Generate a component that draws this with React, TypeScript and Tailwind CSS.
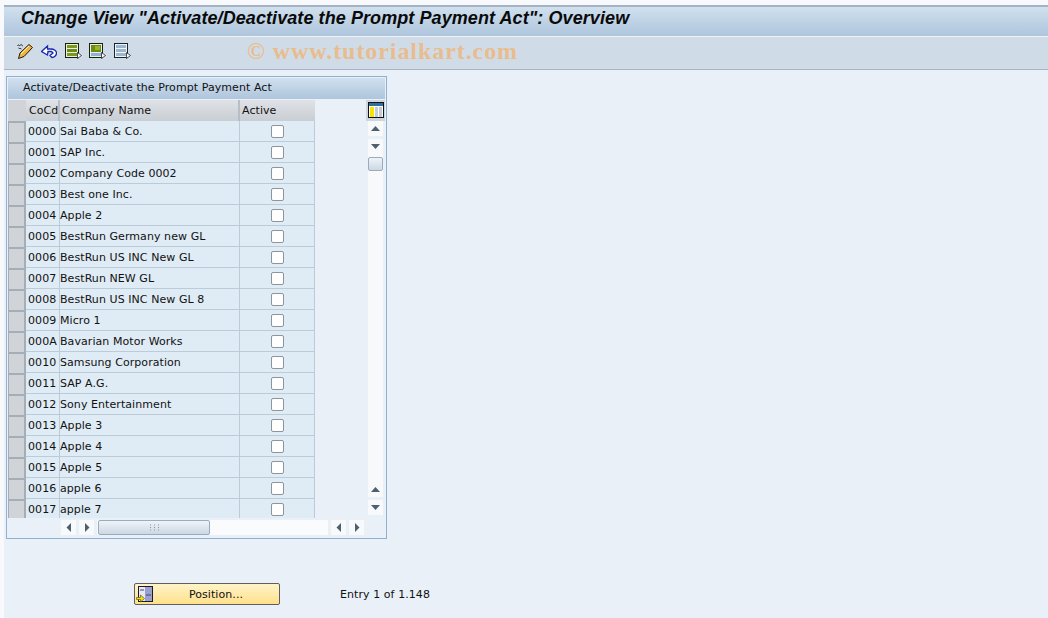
import React from 'react';

const rows = [
  ['0000', 'Sai Baba & Co.'],
  ['0001', 'SAP Inc.'],
  ['0002', 'Company Code 0002'],
  ['0003', 'Best one Inc.'],
  ['0004', 'Apple 2'],
  ['0005', 'BestRun Germany new GL'],
  ['0006', 'BestRun US INC New GL'],
  ['0007', 'BestRun NEW GL'],
  ['0008', 'BestRun US INC New GL 8'],
  ['0009', 'Micro 1'],
  ['000A', 'Bavarian Motor Works'],
  ['0010', 'Samsung Corporation'],
  ['0011', 'SAP A.G.'],
  ['0012', 'Sony Entertainment'],
  ['0013', 'Apple 3'],
  ['0014', 'Apple 4'],
  ['0015', 'Apple 5'],
  ['0016', 'apple 6'],
  ['0017', 'apple 7'],
];

const Pointer = () => <path d="M12.5 9.5v6l4-3z" fill="#fff" stroke="#222" strokeWidth="0.8" />;

const SelectAllIcon = () => (
  <svg width="17" height="16" viewBox="0 0 17 16">
    <rect x="0.5" y="0.5" width="13" height="14" fill="#e8eef2" stroke="#16200c" />
    <rect x="2" y="2" width="10" height="3" fill="#7d9a12" />
    <rect x="2" y="6" width="10" height="3" fill="#6e8c0e" />
    <rect x="2" y="10" width="10" height="3" fill="#7d9a12" />
    <Pointer />
  </svg>
);

const SelectBlockIcon = () => (
  <svg width="17" height="16" viewBox="0 0 17 16">
    <rect x="0.5" y="0.5" width="13" height="14" fill="#e8eef2" stroke="#16200c" />
    <rect x="2" y="2" width="10" height="7" fill="#6e8c0e" />
    <rect x="6" y="3" width="5" height="4" fill="#9ab52a" />
    <rect x="2" y="10" width="10" height="3" fill="#8fb2cc" />
    <Pointer />
  </svg>
);

const DeselectIcon = () => (
  <svg width="17" height="16" viewBox="0 0 17 16">
    <rect x="0.5" y="0.5" width="13" height="14" fill="#f2f5f8" stroke="#1a2430" />
    <rect x="2" y="2" width="10" height="3" fill="#9bb6cf" />
    <rect x="2" y="6" width="10" height="3" fill="#9bb6cf" />
    <rect x="2" y="10" width="10" height="3" fill="#9bb6cf" />
    <Pointer />
  </svg>
);

const Arrow = ({ dir }: { dir: 'up' | 'down' | 'left' | 'right' }) => {
  const d = {
    up: 'M1 6h9L5.5 1z',
    down: 'M1 1h9L5.5 6z',
    left: 'M5 1v9L0.5 5.5z',
    right: 'M1 1v9l4.5-4.5z',
  }[dir];
  const horizontal = dir === 'left' || dir === 'right';
  return (
    <div className="flex h-[15px] w-[15px] items-center justify-center bg-[#f7f9fb]">
      <svg width={horizontal ? 6 : 11} height={horizontal ? 11 : 7} viewBox={horizontal ? '0 0 6 11' : '0 0 11 7'}>
        <path d={d} fill="#4d6070" />
      </svg>
    </div>
  );
};

export default function App() {
  return (
    <div className="h-[618px] w-[1048px] overflow-hidden bg-[#f8f9fc] pl-1 text-[11px] leading-[15px] tracking-[0.07px] text-[#111] font-['DejaVu_Sans',sans-serif]">
      <div className="h-[5px]" />
      <div className="flex h-[32px] items-start border-t-2 border-b border-t-[#a4b2c4] border-b-[#f0f4f8] bg-gradient-to-b from-[#d0e0ee] to-[#aec5dc] pl-[17px] pt-[1px]">
        <span className="font-['Liberation_Sans',sans-serif] text-[18px] leading-[21px] font-bold italic tracking-[0.08px] text-[#0a0a0a]">
          Change View "Activate/Deactivate the Prompt Payment Act": Overview
        </span>
      </div>
      <div className="flex h-[33px] items-center border-b border-b-[#a5b5c6] bg-[#cfdce7] pb-[4px] pl-[13px]">
        <div className="flex items-center gap-[8px]">
          <svg width="16" height="16" viewBox="0 0 16 16">
            <path d="M0.500 3c1-2.500 2 1 3-1s1.500 2 2.500 0.500M1.500 5c1 1 2 0 3 1" fill="none" stroke="#222" />
            <path d="M12 1.500l3.500 3-8.500 9-5.500 2 1.500-5.500z" fill="#f4b63a" stroke="#1a1a1a" />
            <path d="M4 11l8-8" stroke="#fff2c0" />
          </svg>
          <svg width="16" height="16" viewBox="0 0 16 16">
            <path d="M0.500 8.500l6-5.500v3h3.500c3 0 5.500 2 5.500 4s-2 4.500-4.500 4.500l-2-2 3-2.500-1.500-1.500H7l-0.500 3.500z" fill="#fff" stroke="#1826b0" strokeWidth="1.300" />
          </svg>
          <SelectAllIcon />
          <div className="ml-[-1px] flex gap-[8px]">
            <SelectBlockIcon />
            <DeselectIcon />
          </div>
        </div>
        <span className="ml-[116px] font-['Liberation_Serif',serif] text-[24px] leading-[28px] font-bold tracking-[0.93px] text-[#e9bc8e]">
          © www.tutorialkart.com
        </span>
      </div>
      <div className="h-[548px] bg-[#e9f0f7] pl-[2px] pt-[6px]">
        <div className="w-[381px] border border-[#8fb0d0] bg-[#e9f0f7] p-px">
          <div className="flex h-[22px] items-center border-b border-b-[#e9f0f7] bg-gradient-to-b from-[#d0e0ee] to-[#aec5dc] pb-[2px] pl-[15px]">
            Activate/Deactivate the Prompt Payment Act
          </div>
          <div className="flex">
            <div className="w-[360px]">
              <div className="flex h-[418px] flex-col overflow-hidden">
                <div className="flex h-[21px] shrink-0">
                  <div className="w-[18px] bg-[#d0d4d9]" />
                  <div className="flex w-[34px] items-center border-r-2 border-r-[#b6bfc7] bg-gradient-to-b from-[#dfe2e6] to-[#c9ced4] pl-[3px]">CoCd</div>
                  <div className="flex w-[180px] items-center border-r-2 border-r-[#b6bfc7] bg-gradient-to-b from-[#dfe2e6] to-[#c9ced4] pl-[2px]">Company Name</div>
                  <div className="flex w-[75px] items-center bg-gradient-to-b from-[#dfe2e6] to-[#c9ced4] pl-[2px]">Active</div>
                </div>
                {rows.map(([code, name]) => (
                  <div key={code} className="flex h-[21px] shrink-0">
                    <div className="w-[18px] border-t-2 border-l border-r-2 border-t-[#a5adb6] border-l-[#a5adb6] border-r-[#a5adb6] bg-[#d0d4d9]" />
                    <div className="flex w-[34px] items-center border-r border-b border-[#bccbd8] bg-[#dfebf5] pl-[2px]">{code}</div>
                    <div className="flex w-[180px] items-center border-r border-b border-[#bccbd8] bg-[#dfebf5]">{name}</div>
                    <div className="flex w-[75px] items-center justify-center border-r border-b border-[#bccbd8] bg-[#dfebf5]">
                      <div className="h-[13px] w-[13px] rounded-[2px] border border-[#8e9499] bg-white" />
                    </div>
                  </div>
                ))}
              </div>
              <div className="mt-[2px] flex h-[15px] items-center gap-[3px] pl-[53px]">
                <Arrow dir="left" />
                <Arrow dir="right" />
                <div className="flex h-[15px] w-[231px] bg-[#fafbfc] pl-[1px]">
                  <div className="flex h-[15px] w-[112px] items-center justify-center rounded-[2px] border border-[#9aabbc] bg-gradient-to-b from-[#eef3f8] to-[#ccd8e4]">
                    <svg width="9" height="7" viewBox="0 0 9 7">
                      <path d="M0 1h1M4 1h1M8 1h1M0 3.500h1M4 3.500h1M8 3.500h1M0 6h1M4 6h1M8 6h1" stroke="#8a97a3" />
                    </svg>
                  </div>
                </div>
                <Arrow dir="left" />
                <Arrow dir="right" />
              </div>
            </div>
            <div className="flex w-[19px] flex-col items-center">
              <div className="flex h-[21px] w-[19px] items-start justify-center bg-[#cfd5db] pt-[2px]">
                <svg width="16" height="16" viewBox="0 0 16 16">
                  <rect x="0.5" y="0.5" width="15" height="15" fill="#fff" stroke="#111" />
                  <rect x="1" y="1" width="14" height="3" fill="#2f6f9f" />
                  <rect x="2" y="5" width="4" height="10" fill="#f5e400" />
                  <rect x="7" y="5" width="3" height="10" fill="#c2ccd6" />
                  <rect x="11" y="5" width="3" height="10" fill="#c2ccd6" />
                </svg>
              </div>
              <div className="flex h-[394px] w-[15px] flex-col bg-[#f7f9fb]">
                <Arrow dir="up" />
                <div className="h-[3px] bg-[#e9f0f7]" />
                <Arrow dir="down" />
                <div className="mt-[3px] h-[14px] w-[15px] rounded-[2px] border border-[#9aabbc] bg-gradient-to-b from-[#eef3f8] to-[#ccd8e4]" />
                <div className="flex-1" />
                <Arrow dir="up" />
                <div className="h-[3px] bg-[#e9f0f7]" />
                <Arrow dir="down" />
              </div>
            </div>
          </div>
          <div className="h-[2px]" />
        </div>
        <div className="mt-[44px] flex items-center pl-[128px]">
          <div className="relative flex h-[22px] w-[146px] items-center justify-center rounded-[2px] border border-[#5f5f5f] bg-gradient-to-b from-[#fff4c8] to-[#ffe08a] pl-[18px]">
            <svg className="absolute left-[1px] top-[2px]" width="17" height="17" viewBox="0 0 17 17">
              <rect x="2.500" y="0.500" width="14" height="15" fill="#e6e8f2" stroke="#1a1a2a" />
              <rect x="9" y="1" width="7" height="14" fill="#9aa0d0" />
              <path d="M4 4h4M10 9h5" stroke="#44486a" />
              <path d="M0.500 11.500h4v-2.500l4 3.500-4 3.500v-2.500h-4z" fill="#f6e000" stroke="#4a4a20" strokeWidth="0.6" />
            </svg>
            Position...
          </div>
          <span className="ml-[60px]">Entry 1 of 1.148</span>
        </div>
      </div>
    </div>
  );
}
